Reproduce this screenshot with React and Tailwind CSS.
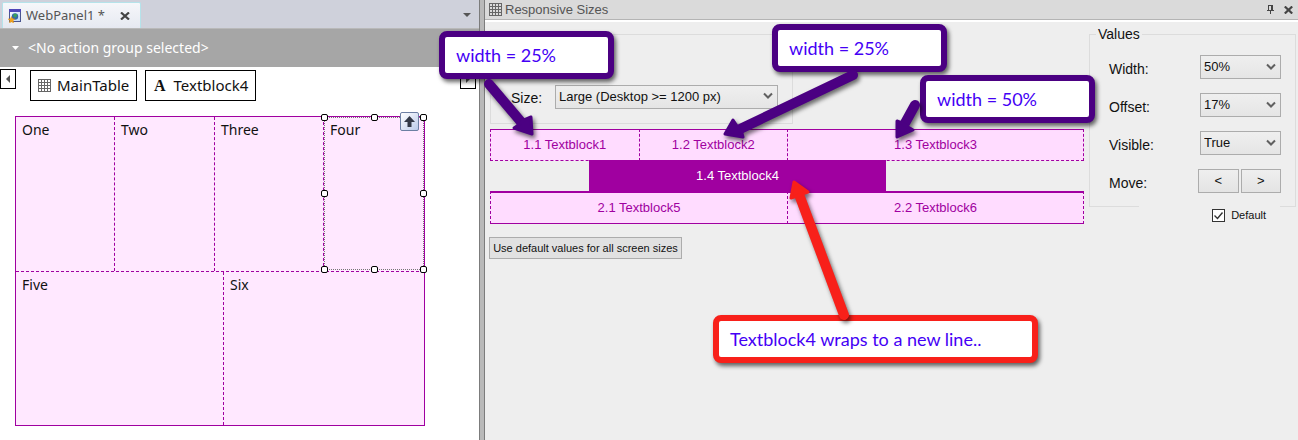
import React from "react";

const sans = "font-['Liberation_Sans',sans-serif]";

function GridIcon({ className }) {
  return (
    <svg className={className} width="13" height="13" viewBox="0 0 13 13" fill="none" stroke="currentColor" shapeRendering="crispEdges" aria-hidden="true">
      <path d="M.5 .5h12v12h-12zM3.5 .5v12M6.5 .5v12M9.5 .5v12M.5 3.5h12M.5 6.5h12M.5 9.5h12" />
    </svg>
  );
}

function WebPanelIcon() {
  return (
    <svg width="14" height="14" viewBox="0 0 14 14" aria-hidden="true">
      <defs>
        <linearGradient id="page" x1="0" y1="0" x2="1" y2="1">
          <stop offset="0" stopColor="#fff" />
          <stop offset="1" stopColor="#b9d4f5" />
        </linearGradient>
      </defs>
      <rect x="1.5" y=".5" width="11" height="12" fill="url(#page)" stroke="#4a5590" />
      <rect x="1" y="0" width="12" height="3" fill="#4f46b8" />
      <circle cx="7" cy="7.5" r="3.2" fill="#3568a8" />
      <path d="M5 6l2-1.6 2.2 1.2-.8 2.4-2 .6z" fill="#3ba05a" />
      <path d="M3.5 7.5l1 2.2 2.4.3-1.8 1.6.5 2.3-2.1-1.1-2.1 1.1.5-2.3L.1 10l2.4-.3z" fill="#f3a51d" stroke="#d98a10" strokeWidth=".4" />
    </svg>
  );
}

function Select({ id, value, className }) {
  return (
    <div className={`relative h-6 ${className}`}>
      <select id={id} defaultValue={value} className="h-full w-full appearance-none border border-[#acacac] bg-linear-to-b from-[#efefef] to-[#e5e5e5] pl-[3px] pr-6 font-['Liberation_Sans',sans-serif] text-[13px] leading-5 text-[#111]">
        <option>{value}</option>
      </select>
      <svg className="pointer-events-none absolute right-[5px] top-2" width="10" height="8" viewBox="0 0 10 8" fill="none" stroke="#606060" strokeWidth="2" aria-hidden="true">
        <path d="M1 1.5l4 4 4-4" />
      </svg>
    </div>
  );
}

function Handle({ className }) {
  return <span className={`absolute size-[7px] rounded-xs border border-black bg-white ${className}`} />;
}

function Callout({ className, children }) {
  return (
    <div className={`absolute flex h-12 items-center rounded-lg border-6 bg-white pl-[11px] font-['Lato',sans-serif] text-lg text-[#4400f5] shadow-[2px_3px_4px_rgba(0,0,0,0.6)] ${className}`}>
      {children}
    </div>
  );
}

function Designer() {
  const cell = "border-dashed border-[#a000a0] pl-1.5 pt-[3px]";
  return (
    <section className="flex min-w-0 flex-col bg-white font-['Noto_Sans',sans-serif]">
      <div className="flex h-[29px] items-end justify-between border-b border-[#b9b9b9] bg-[#cfd1db] pl-0.5 pr-2">
        <div className="flex h-[26px] w-[139px] items-center rounded-t-xs border border-b-0 border-[#b5e3ea] bg-linear-to-b from-[#f6f7fa] to-[#e6e9f1] pl-[5px] pr-2.5 text-[#555]">
          <WebPanelIcon />
          <span className="ml-1 flex-1 whitespace-nowrap text-[13px]">WebPanel1 *</span>
          <button aria-label="Close tab">
            <svg width="10" height="8" viewBox="0 0 10 8" stroke="#444" strokeWidth="2.2" aria-hidden="true"><path d="M1 .5l8 7M9 .5l-8 7" /></svg>
          </button>
        </div>
        <button aria-label="Open documents" className="mb-[11px]">
          <svg width="8" height="4" viewBox="0 0 8 4" fill="#555" aria-hidden="true"><path d="M0 0h8L4 4z" /></svg>
        </button>
      </div>
      <button className="flex h-[38px] items-center gap-[9px] bg-[#a6a6a6] pl-3 text-left text-sm text-white">
        <svg width="7" height="4" viewBox="0 0 7 4" fill="#fff" aria-hidden="true"><path d="M0 0h7L3.5 4z" /></svg>
        &lt;No action group selected&gt;
      </button>
      <div className="flex items-start pr-[3px] pt-0.5 text-[15px] text-[#111]">
        <button aria-label="Scroll left" className="flex h-5 w-4 items-center justify-center border border-black">
          <svg width="4" height="8" viewBox="0 0 4 8" fill="#555" aria-hidden="true"><path d="M4 0v8L0 4z" /></svg>
        </button>
        <div className="flex flex-1 gap-2 pl-3.5 pt-px">
          <button className="flex h-[31px] w-[107px] items-center gap-1.5 border border-black pl-[7px]">
            <GridIcon className="text-[#666]" />MainTable
          </button>
          <button className="flex h-[31px] w-[111px] items-center gap-2 border border-black pl-2">
            <span className="font-['Liberation_Serif',serif] text-base font-bold">A</span>Textblock4
          </button>
        </div>
        <button aria-label="Scroll right" className="flex h-5 w-4 items-center justify-center border border-black">
          <svg width="4" height="8" viewBox="0 0 4 8" fill="#555" aria-hidden="true"><path d="M0 0v8l4-4z" /></svg>
        </button>
      </div>
      <div className="ml-[15px] mr-[54px] mt-[15px] border border-[#a000a0] bg-[#ffe8ff] text-sm leading-5 text-[#111]">
        <div className="grid h-[155px] grid-cols-[99fr_100fr_109fr_100fr] border-b border-dashed border-[#a000a0]">
          <div className={`${cell} border-r`}>One</div>
          <div className={`${cell} border-r`}>Two</div>
          <div className={`${cell} border-r`}>Three</div>
          <div className="relative mb-px border border-dotted border-[#777] pl-[5px] pt-0.5">
            Four
            <Handle className="-left-1 -top-1" />
            <Handle className="-top-1 left-[46px]" />
            <Handle className="-right-1 -top-1" />
            <Handle className="-left-1 top-[72px]" />
            <Handle className="-right-1 top-[72px]" />
            <Handle className="-bottom-1 -left-1" />
            <Handle className="-bottom-1 left-[46px]" />
            <Handle className="-bottom-1 -right-1" />
            <button aria-label="Select parent" className="absolute -top-1.5 right-1 flex size-[19px] items-center justify-center rounded-xs border border-[#6c7fa3] bg-linear-to-br from-white to-[#bccbea]">
              <svg width="11" height="11" viewBox="0 0 11 11" fill="#333947" aria-hidden="true"><path d="M5.5 0L11 6H7.5v5h-4V6H0z" /></svg>
            </button>
          </div>
        </div>
        <div className="grid h-[153px] grid-cols-[208fr_200fr]">
          <div className={`${cell} border-r`}>Five</div>
          <div className={cell}>Six</div>
        </div>
      </div>
    </section>
  );
}

function Preview() {
  const block = "flex h-8 items-center justify-center border-[#a000a0] bg-[#ffdcff]";
  return (
    <div className="grid grid-cols-12 text-[13px] text-[#a000a0]">
      <div className={`${block} col-span-3 border border-r-0 border-dashed [border-top-style:solid]`}>1.1 Textblock1</div>
      <div className={`${block} col-span-3 border border-r-0 border-dashed [border-top-style:solid]`}>1.2 Textblock2</div>
      <div className={`${block} col-span-6 border border-dashed [border-top-style:solid]`}>1.3 Textblock3</div>
      <div className="col-span-6 col-start-3 -mt-px flex h-[31px] items-center justify-center bg-[#a000a0] text-white">1.4 Textblock4</div>
      <div className={`${block} col-span-6 col-start-1 h-[33px] border border-r-0 border-t-2 border-dashed [border-bottom-style:solid] [border-top-style:solid]`}>2.1 Textblock5</div>
      <div className={`${block} col-span-6 h-[33px] border border-t-2 border-dashed [border-bottom-style:solid] [border-top-style:solid]`}>2.2 Textblock6</div>
    </div>
  );
}

function SizesPanel() {
  const row = "flex h-[38px] items-start justify-between";
  const move = "h-6 flex-1 border border-[#acacac] bg-linear-to-b from-[#efefef] to-[#e4e4e4] text-[13px] leading-5";
  return (
    <section className={`flex min-w-0 flex-col bg-[#eeeeee] ${sans}`}>
      <header className="flex h-5 items-center border-b border-[#b4b4b4] bg-[#dadada] pl-1 pr-[5px] text-[#555]">
        <GridIcon className="text-[#666]" />
        <h2 className="ml-[3px] flex-1 text-[13px] leading-[18px]">Responsive Sizes</h2>
        <button aria-label="Pin" className="mr-2.5">
          <svg width="7" height="9" viewBox="0 0 7 9" fill="none" stroke="#444" shapeRendering="crispEdges" aria-hidden="true"><path d="M1.5 5V.5h4V5M4.5 0v5M0 5.5h7M3.5 6v3" /></svg>
        </button>
        <button aria-label="Close panel">
          <svg width="9" height="8" viewBox="0 0 9 8" stroke="#444" strokeWidth="2.2" aria-hidden="true"><path d="M.8 .5l7.4 7M8.2 .5l-7.4 7" /></svg>
        </button>
      </header>
      <div className="flex flex-1 gap-[5px] border-t-2 border-white pl-[5px] pr-0.5 text-[#111]">
        <div className="min-w-0 flex-1">
          <fieldset aria-label="Screen size" className="mt-3 flex h-[90px] w-[303px] border border-[#dcdcdc] pl-5 pt-[49px]">
            <label htmlFor="size" className="w-11 pt-1 text-sm leading-5">Size:</label>
            <Select id="size" value="Large (Desktop >= 1200 px)" className="w-[223px]" />
          </fieldset>
          <div className="mt-[5px]"><Preview /></div>
          <button className="-ml-px mt-[13px] h-[22px] w-[193px] whitespace-nowrap border border-[#acacac] bg-[#e1e1e1] text-[11px] leading-5">
            Use default values for all screen sizes
          </button>
        </div>
        <div className="w-[207px]">
          <fieldset className="mt-1 h-[181px] border border-[#dcdcdc] pl-[19px] pr-3.5">
            <legend className="-ml-[13px] px-0.5 text-sm leading-4">Values</legend>
            <div className="pt-[13px] text-sm leading-5">
              <div className={row}><label htmlFor="width" className="pt-1">Width:</label><Select id="width" value="50%" className="w-[81px]" /></div>
              <div className={row}><label htmlFor="offset" className="pt-1">Offset:</label><Select id="offset" value="17%" className="w-[81px]" /></div>
              <div className={row}><label htmlFor="visible" className="pt-1">Visible:</label><Select id="visible" value="True" className="w-[81px]" /></div>
              <div className={row}>
                <span className="pt-1">Move:</span>
                <div className="flex w-[83px] gap-0.5"><button className={move}>&lt;</button><button className={move}>&gt;</button></div>
              </div>
            </div>
          </fieldset>
          <div className="relative -mt-1 ml-[50px] mr-4 flex h-6 items-center justify-end bg-[#eeeeee] pr-3.5">
            <label className="flex items-center gap-1.5 text-[11px]">
              <input type="checkbox" defaultChecked className="size-[13px] appearance-none border border-[#333] bg-white bg-[url('data:image/svg+xml,%3Csvg%20xmlns=%22http://www.w3.org/2000/svg%22%20viewBox=%220%200%2011%2011%22%3E%3Cpath%20d=%22M1.5%205.5l3%203%205-6%22%20fill=%22none%22%20stroke=%22%23333%22%20stroke-width=%221.4%22/%3E%3C/svg%3E')]" />
              Default
            </label>
          </div>
        </div>
      </div>
    </section>
  );
}

function Arrows() {
  return (
    <svg className="pointer-events-none absolute left-0 top-0 overflow-visible [filter:drop-shadow(2px_3px_2px_rgba(0,0,0,0.55))]" width="1298" height="440" strokeLinecap="round" strokeLinejoin="round" aria-hidden="true">
      <g stroke="#4b0082" fill="#4b0082">
        <path d="M489 84l33 39" strokeWidth="10" />
        <path d="M532 134l-1-17-7 3-7 6-3 2z" strokeWidth="3" />
        <path d="M853 75L738 130" strokeWidth="10" />
        <path d="M725 134l8-14 4 6 5 7 1 4z" strokeWidth="3" />
        <path d="M915 105l-11 20" strokeWidth="10" />
        <path d="M897 137l0-16 5 2 6 4 5 3z" strokeWidth="3" />
      </g>
      <g stroke="#f8201a" fill="#f8201a">
        <path d="M844 315l-44-118" strokeWidth="10" />
        <path d="M794 182l-3 16 6-2 5-2 6-2z" strokeWidth="3" />
      </g>
    </svg>
  );
}

export default function App() {
  return (
    <main className="relative grid min-h-screen grid-cols-[479fr_6px_813fr]">
      <Designer />
      <div className="border-x border-[#7c7c7c] bg-[#b9b9b9]" />
      <SizesPanel />
      <Callout className="left-[439px] top-[31px] w-[175px] border-[#4b0082]">width = 25%</Callout>
      <Callout className="left-[772px] top-6 w-[175px] border-[#4b0082]">width = 25%</Callout>
      <Callout className="left-[920px] top-[75px] w-[175px] border-[#4b0082]">width = 50%</Callout>
      <Callout className="left-[713px] top-[315px] w-[325px] border-[#f8201a]">Textblock4 wraps to a new line..</Callout>
      <Arrows />
    </main>
  );
}
